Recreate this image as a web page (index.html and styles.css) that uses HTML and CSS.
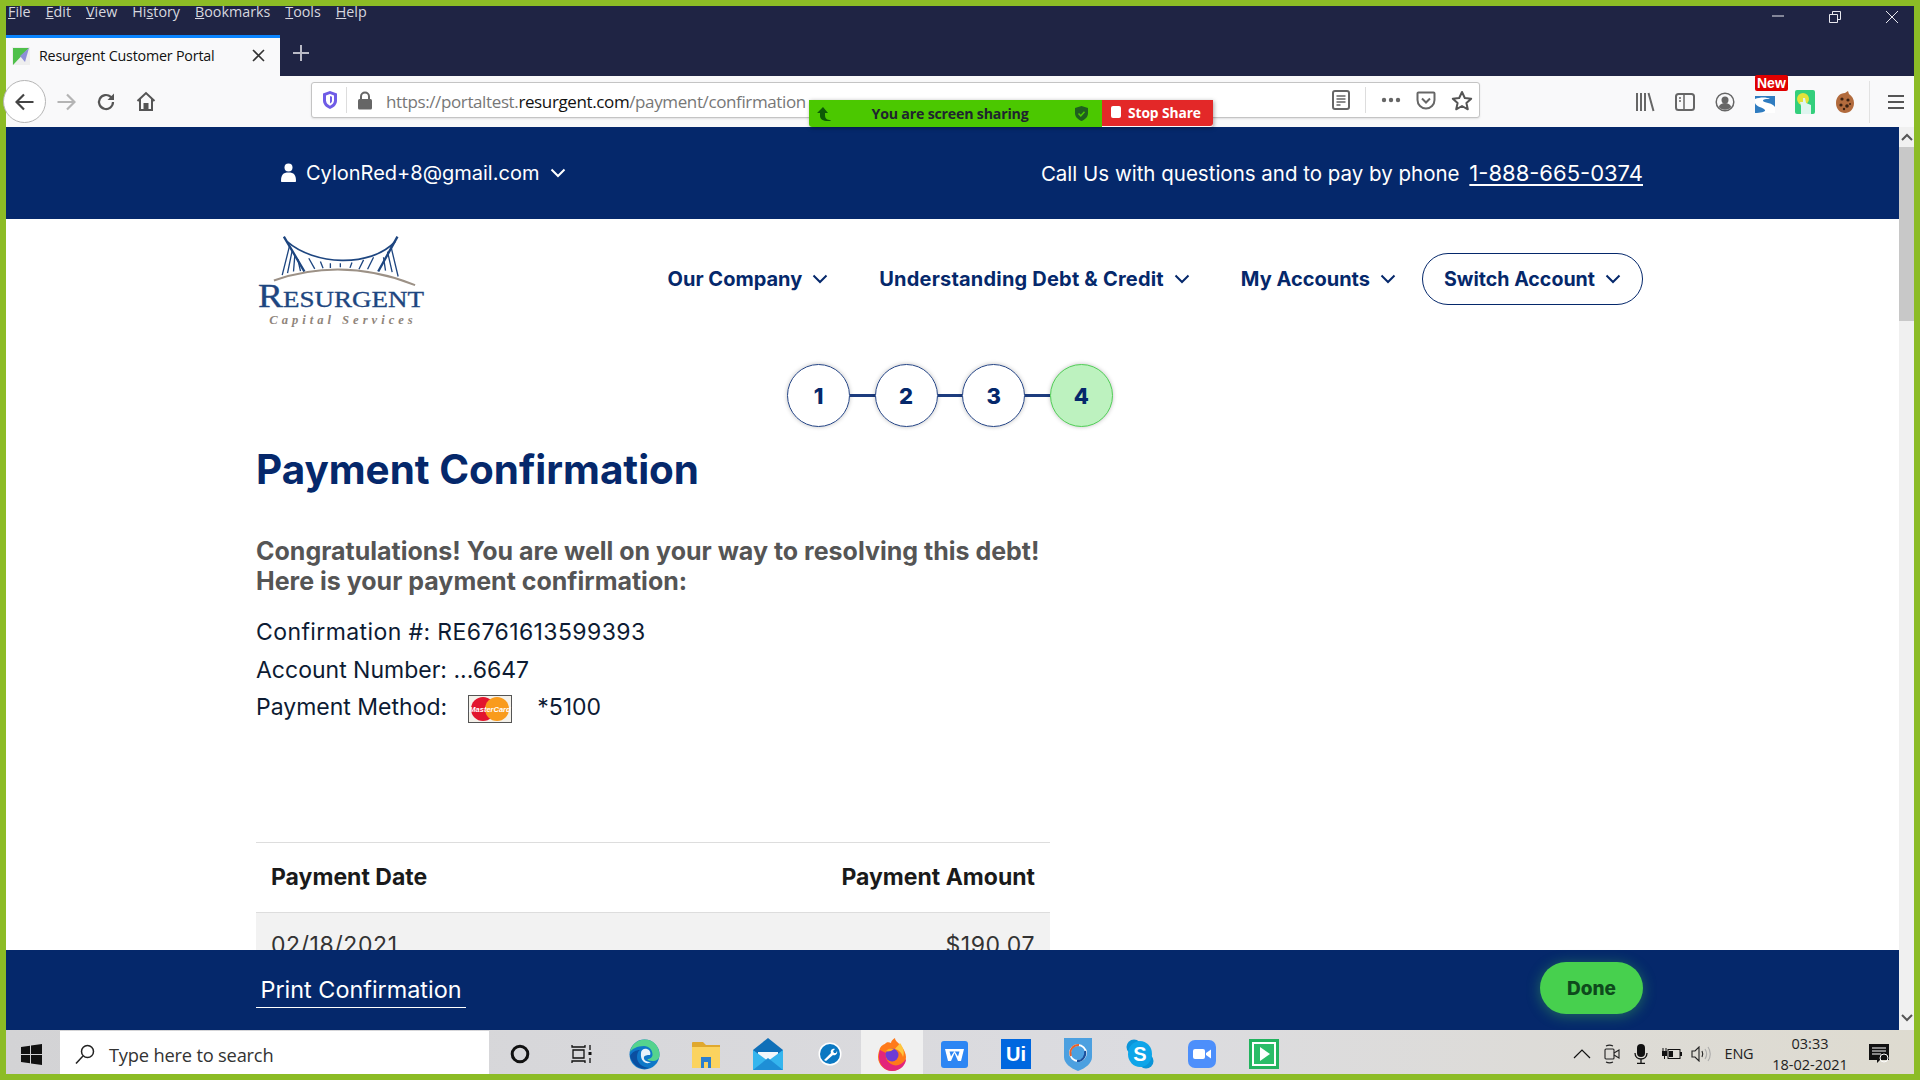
FILE: index.html
```html
<!DOCTYPE html>
<html>
<head>
    <title>Resurgent Customer Portal</title>
    <link rel="stylesheet" href="styles.css">
</head>
<body>
<div class="screen">
    <div class="titlebar">
        <div class="menu-row">
            <div class="menu">
                <span><u>F</u>ile</span>
                <span><u>E</u>dit</span>
                <span><u>V</u>iew</span>
                <span>Hi<u>s</u>tory</span>
                <span><u>B</u>ookmarks</span>
                <span><u>T</u>ools</span>
                <span><u>H</u>elp</span>
            </div>
            <div class="window-btns">
                <svg width="14" height="14" viewBox="0 0 14 14"><path d="M1 6h12" stroke="#e8e8ee" stroke-width="1"/></svg>
                <svg width="14" height="14" viewBox="0 0 14 14" fill="none" stroke="#e8e8ee"><path d="M1.5 4.5h8v8h-8zM4.5 4.5v-3h8v8h-3"/></svg>
                <svg width="14" height="14" viewBox="0 0 14 14"><path d="M1 1l12 12M13 1L1 13" stroke="#e8e8ee"/></svg>
            </div>
        </div>
        <div class="tab-row">
            <div class="tab">
                <svg class="tab-icon" width="18" height="18" viewBox="0 0 18 18"><rect width="18" height="18" fill="#eee"/><path d="M1 1h16L1 18z" fill="#4fc04a"/><path d="M8 9l9-8-4 14z" fill="#8d8fd8"/></svg>
                <span class="tab-title">Resurgent Customer Portal</span>
                <svg class="tab-close" width="13" height="13" viewBox="0 0 13 13"><path d="M1 1l11 11M12 1L1 12" stroke="#333" stroke-width="1.6"/></svg>
            </div>
            <svg class="tab-new" width="18" height="18" viewBox="0 0 18 18"><path d="M9 1v16M1 9h16" stroke="#b9bac6" stroke-width="2"/></svg>
        </div>
    </div>

    <div class="toolbar">
        <div class="back-btn">
            <svg width="20" height="18" viewBox="0 0 20 18" fill="none" stroke="#444" stroke-width="2.2"><path d="M1.5 9h17M9 1.5L1.5 9 9 16.5"/></svg>
        </div>
        <div class="tool-btn">
            <svg width="20" height="18" viewBox="0 0 20 18" fill="none" stroke="#b4b4b4" stroke-width="2.2"><path d="M18.5 9h-17M11 1.5L18.5 9 11 16.5"/></svg>
        </div>
        <div class="tool-btn">
            <svg width="20" height="20" viewBox="0 0 20 20" fill="none" stroke="#555" stroke-width="2.2"><path d="M17 10a7 7 0 1 1-2.2-5.1L17 7"/><path d="M18 1.5V8h-6.500z" fill="#555" stroke="none"/></svg>
        </div>
        <div class="tool-btn">
            <svg width="20" height="21" viewBox="0 0 20 21" fill="none" stroke="#555" stroke-width="2"><path d="M1.500 10L10 2l8.500 8M4 8v11h12V8"/><path d="M8.500 19v-6h3v6" fill="#555"/></svg>
        </div>

        <div class="urlbar">
            <svg class="url-shield" width="16" height="20" viewBox="0 0 16 20"><path d="M8 1l7 2.500v7c0 4-3 7-7 8.500-4-1.500-7-4.500-7-8.500v-7z" fill="#6f5ce6"/><path d="M8 4l4 1.500v5c0 2.500-2 4.300-4 5.200-2-.9-4-2.700-4-5.200v-5z" fill="#fff"/><path d="M8 6l2 .8V11c0 1-1 2-2 2.500z" fill="#6f5ce6"/></svg>
            <span class="url-sep"></span>
            <svg class="url-lock" width="16" height="19" viewBox="0 0 16 19"><path d="M4 8V5.500a4 4 0 0 1 8 0V8" fill="none" stroke="#666" stroke-width="2"/><rect x="1" y="8" width="14" height="10.500" rx="1.500" fill="#666"/></svg>
            <span class="url-text">https://portaltest.<b>resurgent.com</b>/payment/confirmation</span>
            <div class="url-actions">
                <svg width="18" height="20" viewBox="0 0 18 20" fill="none" stroke="#666"><rect x="1" y="1" width="16" height="18" rx="2" stroke-width="2"/><path d="M4.500 6h9M4.500 9h9M4.500 12h9M4.500 15h4" stroke-width="1.500"/></svg>
                <span class="url-sep"></span>
                <svg width="20" height="6" viewBox="0 0 20 6" fill="#666"><circle cx="3" cy="3" r="2.200"/><circle cx="10" cy="3" r="2.200"/><circle cx="17" cy="3" r="2.200"/></svg>
                <svg width="20" height="19" viewBox="0 0 20 19" fill="none" stroke="#666" stroke-width="2"><path d="M2.500 1.500h15a1 1 0 0 1 1 1V9a8.500 8.500 0 0 1-17 0V2.500a1 1 0 0 1 1-1z"/><path d="M6 7.500l4 4 4-4"/></svg>
                <svg width="22" height="21" viewBox="0 0 22 21" fill="none" stroke="#555" stroke-width="2" stroke-linejoin="round"><path d="M11 2l2.800 6 6.400.700-4.800 4.300 1.400 6.300L11 16l-5.800 3.300L6.600 13 1.800 8.700 8.200 8z"/></svg>
            </div>
        </div>

        <div class="tools-right">
            <div class="tool-btn">
                <svg width="20" height="20" viewBox="0 0 20 20" fill="none" stroke="#666" stroke-width="2"><path d="M2 1v18M6 1v18M10 1v18M13.500 1l5 18"/></svg>
            </div>
            <div class="tool-btn">
                <svg width="20" height="20" viewBox="0 0 20 20" fill="none" stroke="#666" stroke-width="2"><rect x="1" y="2" width="18" height="16" rx="2.500"/><path d="M9 2v16M4 6h2M4 9h2" stroke-width="1.500"/></svg>
            </div>
            <div class="tool-btn">
                <svg width="20" height="20" viewBox="0 0 20 20"><circle cx="10" cy="10" r="8.800" fill="none" stroke="#666" stroke-width="1.500"/><circle cx="10" cy="8" r="3.500" fill="#666"/><path d="M3.800 15c1-3 3.500-4 6.200-4s5.200 1 6.200 4c-3 3.500-9.400 3.500-12.400 0z" fill="#666"/></svg>
            </div>
            <div class="tool-btn new-btn">
                <span class="new-badge">New</span>
                <svg width="20" height="17" viewBox="0 0 20 17"><rect width="20" height="17" fill="#2f7cc0"/><path d="M0 3c5-2 12-2 15 0-4 0-7 0-7 2 2 2 10 2 12 6v6H0c5 0 11-1 10-3-2-3-9-3-10-7z" fill="#fff"/></svg>
            </div>
            <div class="tool-btn">
                <svg width="20" height="24" viewBox="0 0 20 24"><rect width="20" height="24" rx="2" fill="#34cf7c"/><circle cx="8" cy="9" r="6" fill="#e4e23a"/><path d="M6 24v-8l-1-4h3v-4h2l1 5 5 2v9z" fill="#dff5ef"/></svg>
            </div>
            <div class="tool-btn">
                <svg width="20" height="24" viewBox="0 0 20 24"><path d="M10 3l3-2 1 3c3 2 5 5 5 9 0 6-4 10-9 10s-9-4-9-10 4-10 9-10z" fill="#b26b3d"/><g fill="#3a2010"><circle cx="7" cy="9" r="1.600"/><circle cx="13" cy="10" r="1.600"/><circle cx="6" cy="15" r="1.600"/><circle cx="12" cy="16" r="1.800"/><circle cx="15" cy="14" r="1"/><circle cx="9" cy="19" r="1.200"/></g></svg>
            </div>
            <span class="tools-sep"></span>
            <div class="menu-btn">
                <svg width="16" height="16" viewBox="0 0 16 16"><path d="M0 2h16M0 8h16M0 14h16" stroke="#555" stroke-width="2.200"/></svg>
            </div>
        </div>

        <div class="share-bar">
            <div class="share-main">
                <svg class="share-arrow" width="14" height="14" viewBox="0 0 14 14"><path d="M6 0L0 6h3v3c0 3 3 5 8 5 2 0 3-.5 3-1-4 0-6-1-6-5V6h3z" fill="#0d5a06"/></svg>
                <span class="share-text">You are screen sharing</span>
                <svg class="share-shield" width="13" height="15" viewBox="0 0 13 15"><path d="M6.500 0L13 2v5c0 4-3 6.500-6.500 8C3 13.500 0 11 0 7V2z" fill="#1f5f1f"/><path d="M3.500 7.500l2.300 2.300 3.700-4" fill="none" stroke="#4bc800" stroke-width="1.500"/></svg>
            </div>
            <div class="share-stop">
                <span class="stop-square"></span>
                <span>Stop Share</span>
            </div>
        </div>
    </div>

    <div class="viewport">
        <div class="page">
            <div class="page-scroll">
                <div class="top-strip">
                    <div class="user-menu">
                        <svg width="15" height="19" viewBox="0 0 15 19" fill="#fff"><circle cx="7.500" cy="4.500" r="4"/><path d="M0 18c0-6 2-8.500 7.500-8.500S15 12 15 18c0 .6-.4 1-1 1H1c-.6 0-1-.4-1-1z"/></svg>
                        <span>CylonRed+8@gmail.com</span>
                        <svg class="chev" width="16" height="10" viewBox="0 0 16 10"><path d="M1.500 1.500L8 8l6.500-6.500" fill="none" stroke="#fff" stroke-width="2"/></svg>
                    </div>
                    <div class="call-us">Call Us with questions and to pay by phone <a class="phone">1-888-665-0374</a></div>
                </div>

                <div class="site-nav">
                    <svg class="logo" width="170" height="93" viewBox="50 45 510 280">
                        <g fill="none" stroke="#1e4680" stroke-width="4">
                            <path d="M130 50l62 105M472 50l-58 105" stroke-width="7"/>
                            <path d="M140 65C220 135 390 145 465 65" stroke-width="5"/>
                            <path d="M147 78l-22 88M155 92l-14 68M163 105l-4 50M172 118l8 36M205 115l18 32M240 125l8 20M270 130v14M300 130v12M335 128l-6 16M370 120l-14 28M400 112l-18 36M430 112l6 40M442 95l14 62M452 78l22 92"/>
                        </g>
                        <path d="M100 182Q310 110 525 196" fill="none" stroke="#9c9186" stroke-width="6"/>
                        <text class="logo-name" x="52" y="262" textLength="500" lengthAdjust="spacingAndGlyphs"><tspan font-size="100">R</tspan>ESURGENT</text>
                        <text class="logo-sub" x="86" y="314" textLength="432">Capital Services</text>
                    </svg>
                    <nav class="nav-links">
                        <a class="nav-item">Our Company <svg class="chev" width="16" height="10" viewBox="0 0 16 10"><path d="M1.500 1.500L8 8l6.500-6.500" fill="none" stroke="#05286b" stroke-width="2"/></svg></a>
                        <a class="nav-item nav-long">Understanding Debt &amp; Credit <svg class="chev" width="16" height="10" viewBox="0 0 16 10"><path d="M1.500 1.500L8 8l6.500-6.500" fill="none" stroke="#05286b" stroke-width="2"/></svg></a>
                        <a class="nav-item nav-last">My Accounts <svg class="chev" width="16" height="10" viewBox="0 0 16 10"><path d="M1.500 1.500L8 8l6.500-6.500" fill="none" stroke="#05286b" stroke-width="2"/></svg></a>
                        <a class="switch-btn">Switch Account <svg class="chev" width="16" height="10" viewBox="0 0 16 10"><path d="M1.500 1.500L8 8l6.500-6.500" fill="none" stroke="#05286b" stroke-width="2"/></svg></a>
                    </nav>
                </div>

                <div class="stepper">
                    <span class="step">1</span><span class="step-line"></span>
                    <span class="step">2</span><span class="step-line"></span>
                    <span class="step">3</span><span class="step-line"></span>
                    <span class="step step-done">4</span>
                </div>

                <div class="content">
                    <h1>Payment Confirmation</h1>
                    <p class="congrats">Congratulations! You are well on your way to resolving this debt!<br>Here is your payment confirmation:</p>
                    <div class="detail">Confirmation #: RE6761613599393</div>
                    <div class="detail">Account Number: ...6647</div>
                    <div class="detail detail-card">
                        <span>Payment Method:</span>
                        <svg class="card" width="44" height="28" viewBox="0 0 44 28">
                            <rect x=".5" y=".5" width="43" height="27" fill="#f4f1ea" stroke="#555"/>
                            <circle cx="15" cy="14" r="12" fill="#e2162e"/>
                            <circle cx="29" cy="14" r="12" fill="#f99b1c"/>
                            <text class="card-text" x="22" y="17" text-anchor="middle">MasterCard</text>
                        </svg>
                        <span>*5100</span>
                    </div>
                    <div class="pay-table">
                        <div class="pay-head"><span>Payment Date</span><span>Payment Amount</span></div>
                        <div class="pay-row"><span>02/18/2021</span><span>$190.07</span></div>
                    </div>
                </div>
            </div>
            <div class="page-footer">
                <a class="print-link">Print Confirmation</a>
                <a class="done-btn">Done</a>
            </div>
        </div>
        <div class="scrollbar">
            <svg width="12" height="8" viewBox="0 0 12 8"><path d="M1 7l5-5 5 5" fill="none" stroke="#555" stroke-width="2"/></svg>
            <div class="scroll-thumb"></div>
            <svg class="scroll-down" width="12" height="8" viewBox="0 0 12 8"><path d="M1 1l5 5 5-5" fill="none" stroke="#555" stroke-width="2"/></svg>
        </div>
    </div>

    <div class="taskbar">
        <div class="start">
            <svg width="21" height="21" viewBox="0 0 21 21" fill="#111"><path d="M0 3l9-1.300V10H0zM10 1.500L21 0v10H10zM0 11h9v8.300L0 18zM10 11h11v10l-11-1.500z"/></svg>
        </div>
        <div class="search">
            <svg width="20" height="20" viewBox="0 0 20 20" fill="none" stroke="#222" stroke-width="1.500"><circle cx="12.500" cy="7.500" r="6"/><path d="M8 12L1 19.500"/></svg>
            <span>Type here to search</span>
        </div>
        <div class="task-icons">
            <div class="task-item"><svg width="20" height="20" viewBox="0 0 20 20"><circle cx="10" cy="10" r="7.800" fill="none" stroke="#111" stroke-width="3"/></svg></div>
            <div class="task-item"><svg width="22" height="20" viewBox="0 0 22 20" fill="none" stroke="#111" stroke-width="1.300"><path d="M1 1v2h13V1M1 19v-2h13v2M2 6h11v8H2zM19 1v5M19 14v5"/><rect x="17.500" y="8" width="3" height="3" fill="#111" stroke="none"/></svg></div>
            <div class="task-item"><svg width="31" height="31" viewBox="0 0 31 31"><circle cx="15.500" cy="15.500" r="15" fill="#0f78c8"/><path d="M1 13C3 4 10 .5 15.500 .5 25 .5 30.500 8 30.500 16c0 4-3 6-7 6-3 0-5-1-5-2 3 0 5-2 5-4.500C23.500 11 20 7 15 7 8 7 3 10 1 13z" fill="#55d38e"/><path d="M8 18c0 6 5 10 12 11-8 3-17-3-19-12 2-4 6-6 10-6-2 1-3 4-3 7z" fill="#0b4fa0"/><path d="M12 14c0-3 3-5 6-4 3 1 4 4 3 6-1 0-5 0-6 2-1 3 3 5 7 5-4 3-11 0-10-9z" fill="#fff" opacity=".9"/></svg></div>
            <div class="task-item"><svg width="30" height="29" viewBox="0 0 30 29"><path d="M1 3a1 1 0 0 1 1-1h10l3 3h14v6H1z" fill="#e0a82e"/><path d="M1 7h28v21H1z" fill="#fbd35f"/><path d="M10 28V17h10v11h-3v-6h-4v6z" fill="#2a7fd0"/></svg></div>
            <div class="task-item"><svg width="30" height="32" viewBox="0 0 30 32"><path d="M0 12L15 0l15 12v20H0z" fill="#0f6fb8"/><path d="M5 14h20v6L15 26 5 20z" fill="#f2f7fb"/><path d="M0 12l15 11 15-11v20H0z" fill="#35b5ee"/><path d="M0 32l15-12 15 12z" fill="#1e8fd6"/></svg></div>
            <div class="task-item"><svg width="24" height="24" viewBox="0 0 24 24"><circle cx="12" cy="12" r="11.500" fill="#fff"/><circle cx="12" cy="12" r="10" fill="#0b78c2"/><path d="M6 18l7-7c-1-2 1-5 4-4l-2 2 1 2 2 0 1-2c1 3-2 5-4 4l-7 6z" fill="#fff"/></svg></div>
            <div class="task-item task-active"><svg width="30" height="33" viewBox="0 0 30 33"><path d="M3 10C5 7 7 6 8 6c1-2 4-2 6-1 0-2 2-4 4-5 0 3 3 4 6 8 3 3 5 8 5 11 0 8-7 14-14 14S1 27 1 19c0-3 1-6 2-9z" fill="#ff7a1a"/><path d="M3 12c-3 8 0 20 12 21 9 0 14-7 14-12-4 6-10 8-15 5C9 23 8 18 9 15z" fill="#e3257b"/><path d="M23 5c3 4 5 9 3 14-1-4-4-7-8-8 1-2 3-3 5-6z" fill="#ffc53d"/><circle cx="15" cy="17" r="6.500" fill="#6e3bd6"/><path d="M9 13c2-3 6-3 8-2l-3 2c-2 0-3 1-5 0z" fill="#ffb21d"/></svg></div>
            <div class="task-item"><svg width="27" height="27" viewBox="0 0 27 27"><rect width="27" height="27" rx="3" fill="#2d86f3"/><path d="M4 8h19l-3 12h-3l-3.500-8-3.500 8H7z" fill="#fff"/><path d="M8.500 10.500l1.500 5 3.500-5.500 3.500 5.500 1.500-5z" fill="#2d86f3"/></svg></div>
            <div class="task-item"><div class="ui-icon">Ui</div></div>
            <div class="task-item"><svg width="28" height="33" viewBox="0 0 28 33"><path d="M0 0h28v19c0 6-6 11-14 14C6 30 0 25 0 19z" fill="#4ca0e0"/><circle cx="14" cy="15" r="8" fill="none" stroke="#fff" stroke-width="1.800"/><path d="M7 18a8 8 0 0 1 8-11" fill="none" stroke="#e8622c" stroke-width="2"/><path d="M21 13a8 8 0 0 1-8 10" fill="none" stroke="#1b4f9c" stroke-width="2"/></svg></div>
            <div class="task-item"><svg width="28" height="30" viewBox="0 0 28 30"><circle cx="8" cy="8" r="7.500" fill="#0b94d8"/><circle cx="20" cy="22" r="7.500" fill="#0b94d8"/><ellipse cx="14" cy="15" rx="12" ry="13" fill="#0ea5e9"/><text class="skype-s" x="14" y="22" text-anchor="middle">S</text></svg></div>
            <div class="task-item"><svg width="28" height="28" viewBox="0 0 28 28"><rect width="28" height="28" rx="7" fill="#4d8ffb"/><rect x="5" y="9" width="12" height="10" rx="2" fill="#fff"/><path d="M18 13l5-3.500v9L18 15z" fill="#fff"/></svg></div>
            <div class="task-item"><svg width="30" height="30" viewBox="0 0 30 30"><rect width="30" height="30" fill="#22b35e"/><rect x="3" y="3" width="24" height="24" fill="#fff"/><rect x="5" y="5" width="20" height="20" fill="#2bbd68"/><path d="M11 8l10 7-10 7z" fill="#fff"/></svg></div>
        </div>
        <div class="tray">
            <div class="tray-item tw-30"><svg width="18" height="10" viewBox="0 0 18 10"><path d="M1 9l8-8 8 8" fill="none" stroke="#111" stroke-width="1.200"/></svg></div>
            <div class="tray-item tw-30"><svg width="16" height="20" viewBox="0 0 16 20" fill="none" stroke="#222" stroke-width="1.100"><rect x="1" y="5" width="9" height="10" rx="1"/><path d="M10 9l5-3v8l-5-3M2 2c2-1 5-1 7 0M2 18c2 1 5 1 7 0"/></svg></div>
            <div class="tray-item tw-28"><svg width="14" height="20" viewBox="0 0 14 20"><rect x="3" y="0" width="8" height="13" rx="4" fill="#111"/><path d="M1 9c0 8 12 8 12 0M7 15v4M3 19.500h8" fill="none" stroke="#111" stroke-width="1.300"/></svg></div>
            <div class="tray-item tw-32"><svg width="21" height="12" viewBox="0 0 21 12" fill="none" stroke="#111"><rect x="7" y="1.500" width="12" height="9"/><rect x="8" y="3" width="4" height="6" fill="#111" stroke="none"/><path d="M19 4.500h2v3h-2" fill="#111"/><rect x="1" y="3" width="5" height="5" fill="#111" stroke="none"/><path d="M2 0v3M5 0v3M3.500 8v3"/></svg></div>
            <div class="tray-item tw-30"><svg width="22" height="16" viewBox="0 0 22 16" fill="none" stroke="#222" stroke-width="1.100"><path d="M1 5h3l4-4v14l-4-4H1z"/><path d="M11 5c1 2 1 4 0 6"/><path d="M14 3c2 3 2 7 0 10M17 1c3 4 3 10 0 14" stroke="#aaa"/></svg></div>
            <div class="tray-item tw-44 tray-lang">ENG</div>
            <div class="clock"><span>03:33</span><span>18-02-2021</span></div>
            <div class="tray-item tw-40"><svg width="20" height="20" viewBox="0 0 20 20"><path d="M0 0h20v16h-9l-3 3v-3H0z" fill="#111"/><path d="M3 4h14M3 7h14M3 10h9" stroke="#fff" stroke-width="1.100"/><circle cx="15" cy="14" r="4" fill="none" stroke="#fff"/></svg></div>
        </div>
    </div>
</div>
</body>
</html>
```

FILE: styles.css
```css
html, body {
    margin: 0;
    padding: 0;
    width: 1920px;
    height: 1080px;
    overflow: hidden;
    background-color: #8cbc26;
}

.screen {
    width: 1920px;
    height: 1080px;
    box-sizing: border-box;
    padding: 6px 6px 6px 6px;
    display: flex;
    flex-direction: column;
    font-family: "Inter", sans-serif;
}

/* browser chrome */
.titlebar {
    height: 70px;
    background-color: #1f2444;
    flex: none;
    display: flex;
    flex-direction: column;
}

.menu-row {
    height: 29px;
    display: flex;
    justify-content: space-between;
}

.menu {
    display: flex;
    gap: 15px;
    padding-left: 2px;
    font-family: "Open Sans", sans-serif;
    font-size: 14.3px;
    line-height: 12px;
    color: #d6d7df;
}

.window-btns {
    display: flex;
    align-items: flex-start;
    gap: 43px;
    padding: 4px 15px 0 0;
}

.tab-row {
    flex: 1;
    display: flex;
    align-items: flex-end;
}

.tab {
    width: 274px;
    height: 41px;
    box-sizing: border-box;
    border-top: 3px solid #0a84ff;
    background-color: #f9f9fa;
    display: flex;
    align-items: center;
    padding: 0 15px 3px 6px;
}

.tab-title {
    font-family: "Open Sans", sans-serif;
    font-size: 14.3px;
    color: #111;
    margin-left: 9px;
    letter-spacing: -0.2px;
    flex: 1;
}

.tab-new {
    margin: 0 0 14px 12px;
}

.toolbar {
    height: 51px;
    flex: none;
    background-color: #f9f9fa;
    display: flex;
    align-items: center;
    position: relative;
}

.back-btn {
    width: 43px;
    height: 43px;
    box-sizing: border-box;
    margin-left: -3px;
    border: 1px solid #b5b5b5;
    border-radius: 50%;
    background-color: #fff;
    display: flex;
    align-items: center;
    justify-content: center;
    flex: none;
}

.tool-btn {
    width: 40px;
    display: flex;
    align-items: center;
    justify-content: center;
    flex: none;
    position: relative;
}

.urlbar {
    width: 1169px;
    height: 36px;
    margin: 0 0 3px 145px;
    box-sizing: border-box;
    background-color: #fff;
    border: 1px solid #c4c4c4;
    border-radius: 3px;
    box-shadow: 0 1px 2px rgba(0, 0, 0, 0.1);
    display: flex;
    align-items: center;
    flex: none;
}

.url-shield {
    margin-left: 10px;
}

.url-sep {
    width: 1px;
    height: 26px;
    background-color: #ddd;
    margin-left: 8px;
}

.url-lock {
    margin-left: 10px;
}

.url-text {
    margin: 2px 0 0 13px;
    font-family: "Open Sans", sans-serif;
    font-size: 17px;
    letter-spacing: -0.38px;
    color: #777;
}

.url-text b {
    font-weight: 400;
    color: #111;
}

.url-actions {
    margin-left: auto;
    display: flex;
    align-items: center;
    gap: 15px;
    padding-right: 6px;
}

.url-actions .url-sep {
    margin: 0;
}

.tools-right {
    margin-left: 145px;
    display: flex;
    align-items: center;
}

.new-badge {
    position: absolute;
    top: -15px;
    left: 10px;
    background-color: #e00000;
    color: #fff;
    font-family: "Liberation Sans", sans-serif;
    font-weight: 700;
    font-size: 14px;
    line-height: 16px;
    padding: 0 2px;
    border-radius: 2px;
}

.new-btn svg {
    margin-top: 6px;
}

.tools-sep {
    width: 1px;
    height: 42px;
    background-color: #e2e2e2;
    margin-left: 4px;
}

.menu-btn {
    margin-left: 8px;
    width: 36px;
    display: flex;
    justify-content: center;
}

.share-bar {
    position: absolute;
    left: 803px;
    top: 24px;
    height: 27px;
    display: flex;
    box-shadow: 1px 1px 4px rgba(0, 0, 0, 0.35);
    border-radius: 0 0 3px 3px;
    z-index: 2;
    font-family: "Open Sans", sans-serif;
    font-weight: 700;
    font-size: 14.2px;
}

.share-main {
    width: 293px;
    background-color: #4bc800;
    color: #1f2430;
    display: flex;
    align-items: center;
    padding: 0 14px 0 8px;
    box-sizing: border-box;
    border-radius: 0 0 0 3px;
}

.share-text {
    flex: 1;
    text-align: center;
    letter-spacing: -0.2px;
    padding-right: 6px;
}

.share-stop {
    width: 111px;
    height: 26px;
    background-color: #e32828;
    color: #fff;
    display: flex;
    align-items: center;
    padding: 0 0 2px 9px;
    gap: 7px;
    box-sizing: border-box;
    border-radius: 0 0 3px 0;
    font-size: 13.8px;
    letter-spacing: -0.1px;
}

.stop-square {
    width: 10px;
    height: 12px;
    background-color: #fff;
    border-radius: 2px;
}

/* web page */
.viewport {
    flex: 1;
    min-height: 0;
    display: flex;
}

.page {
    flex: 1;
    min-width: 0;
    display: flex;
    flex-direction: column;
}

.page-scroll {
    flex: 1;
    min-height: 0;
    overflow: hidden;
    background-color: #fff;
}

.top-strip {
    height: 92px;
    box-sizing: border-box;
    background-color: #05286b;
    color: #fff;
    padding: 0 256px 1px 275px;
    display: flex;
    align-items: center;
    justify-content: space-between;
    font-size: 20px;
}

.user-menu {
    display: flex;
    align-items: center;
    gap: 10px;
}

.user-menu .chev {
    margin-left: 1px;
}

.call-us {
    font-size: 20.5px;
}

.phone {
    margin-left: 4px;
    font-size: 22px;
    text-decoration: underline;
    text-underline-offset: 3px;
}

.site-nav {
    height: 134px;
    box-sizing: border-box;
    padding: 16px 256px 0 251px;
    display: flex;
    align-items: flex-start;
    justify-content: space-between;
}

.nav-links {
    display: flex;
    align-items: center;
    height: 52px;
    margin-top: 18px;
    color: #05286b;
    font-size: 20px;
    font-weight: 700;
}

.nav-item {
    margin-right: 51px;
    display: flex;
    align-items: center;
    gap: 5px;
}

.nav-long {
    letter-spacing: 0.2px;
}

.nav-last {
    margin-right: 26px;
}

.chev {
    margin-left: 5px;
    flex: none;
}

.switch-btn {
    width: 221px;
    height: 52px;
    box-sizing: border-box;
    border: 1.5px solid #05286b;
    border-radius: 26px;
    display: flex;
    align-items: center;
    justify-content: center;
    gap: 5px;
    font-size: 19.6px;
}

.logo-name {
    font-family: "Liberation Serif", serif;
    font-size: 72px;
    fill: #1e4680;
    stroke: #1e4680;
    stroke-width: 1;
}

.logo-sub {
    font-family: "Liberation Serif", serif;
    font-style: italic;
    font-weight: 700;
    font-size: 38px;
    fill: #8f857b;
}

.stepper {
    display: flex;
    align-items: center;
    padding-left: 781px;
    margin-top: 11px;
}

.step {
    width: 63px;
    height: 63px;
    box-sizing: border-box;
    border: 1.5px solid #234384;
    border-radius: 50%;
    box-shadow: 0 0 4px rgba(0, 0, 0, 0.25);
    display: flex;
    align-items: center;
    justify-content: center;
    color: #05286b;
    font-size: 22px;
    font-weight: 800;
}

.step-line {
    width: 24.6px;
    height: 3px;
    background-color: #1d3c7e;
}

.step-done {
    background-color: #bdf2bf;
    border-color: #52cf58;
}

.content {
    padding-left: 250px;
    width: 794px;
}

h1 {
    margin: 18px 0 0;
    color: #05286b;
    font-size: 40.4px;
    line-height: 50px;
    font-weight: 700;
}

.congrats {
    margin: 41px 0 0;
    color: #555;
    font-size: 25px;
    font-weight: 700;
    line-height: 30px;
}

.detail {
    color: #0d1b33;
    font-size: 23px;
    line-height: 37.500px;
}

.congrats + .detail {
    margin-top: 18px;
    letter-spacing: 0.4px;
}

.detail-card {
    display: flex;
    align-items: center;
}

.card {
    margin: 2px 25px 0 21px;
}

.card-text {
    font-family: "Liberation Sans", sans-serif;
    font-weight: 700;
    font-style: italic;
    font-size: 7.500px;
    fill: #fff;
}

.pay-table {
    margin-top: 115px;
    border-top: 1px solid #ddd;
    font-size: 23px;
}

.pay-head,
.pay-row {
    display: flex;
    justify-content: space-between;
    padding: 0 15px;
}

.pay-head {
    height: 69px;
    align-items: center;
    font-weight: 700;
    color: #1a1a1a;
    border-bottom: 1px solid #ddd;
}

.pay-row {
    height: 60px;
    padding-top: 18px;
    box-sizing: border-box;
    background-color: #f2f2f2;
    color: #333;
    letter-spacing: 0.6px;
}

.page-footer {
    height: 80px;
    flex: none;
    background-color: #05286b;
    display: flex;
    align-items: center;
    justify-content: space-between;
    padding: 0 256px 0 250px;
}

.print-link {
    width: 210px;
    height: 32px;
    align-self: flex-start;
    margin-top: 26px;
    box-sizing: border-box;
    border-bottom: 1.500px solid #fff;
    color: #fff;
    font-size: 23.4px;
    line-height: 28px;
    text-align: center;
}

.done-btn {
    width: 103px;
    height: 52px;
    border-radius: 26px;
    background-color: #47d04e;
    color: #0e4a1c;
    font-size: 19px;
    font-weight: 800;
    display: flex;
    align-items: center;
    justify-content: center;
    box-shadow: 0 2px 14px rgba(71, 208, 78, 0.4);
    margin-top: -4px;
}

.scrollbar {
    width: 15px;
    flex: none;
    background-color: #f0f0f0;
    display: flex;
    flex-direction: column;
    align-items: center;
    padding-top: 6px;
    box-sizing: border-box;
}

.scroll-thumb {
    width: 100%;
    height: 174px;
    margin-top: 6px;
    background-color: #c8c8c8;
}

.scroll-down {
    margin-top: auto;
    margin-bottom: 8px;
}

/* windows taskbar */
.taskbar {
    height: 44px;
    flex: none;
    background: linear-gradient(90deg, #d3d3d5, #dcdce0 60%, #dedbd0);
    display: flex;
    align-items: stretch;
    overflow: hidden;
}

.start {
    width: 54px;
    flex: none;
    padding: 4px 4px 0 0;
    box-sizing: border-box;
    display: flex;
    align-items: center;
    justify-content: center;
}

.search {
    width: 429px;
    flex: none;
    margin-top: 1px;
    padding: 3px 0 0 15px;
    background-color: #fff;
    display: flex;
    align-items: center;
    gap: 14px;
    box-sizing: border-box;
    font-family: "Open Sans", sans-serif;
    font-size: 18.3px;
    color: #333;
    letter-spacing: -0.2px;
}

.task-icons {
    display: flex;
    flex: none;
}

.task-item {
    width: 62px;
    padding-top: 4px;
    box-sizing: border-box;
    display: flex;
    align-items: center;
    justify-content: center;
}

.task-active {
    background-color: #f0f0f0;
}

.ui-icon {
    width: 30px;
    height: 30px;
    background-color: #0067df;
    color: #fff;
    font-family: "Liberation Sans", sans-serif;
    font-weight: 700;
    font-size: 20px;
    line-height: 30px;
    text-align: center;
}

.skype-s {
    font-family: "Liberation Sans", sans-serif;
    font-weight: 700;
    font-size: 20px;
    fill: #fff;
}

.tray {
    margin-left: auto;
    display: flex;
    padding: 3px 15px 0 0;
    font-family: "Open Sans", sans-serif;
    color: #222;
    font-size: 14.500px;
}

.tray-item {
    display: flex;
    align-items: center;
    justify-content: center;
}

.tw-28 { width: 28px; }
.tw-30 { width: 30px; }
.tw-32 { width: 32px; }
.tw-40 { width: 40px; }
.tw-44 { width: 44px; }

.tray-lang {
    letter-spacing: -0.2px;
}

.clock {
    width: 98px;
    display: flex;
    flex-direction: column;
    align-items: center;
    justify-content: space-between;
    line-height: 21px;
}
```
